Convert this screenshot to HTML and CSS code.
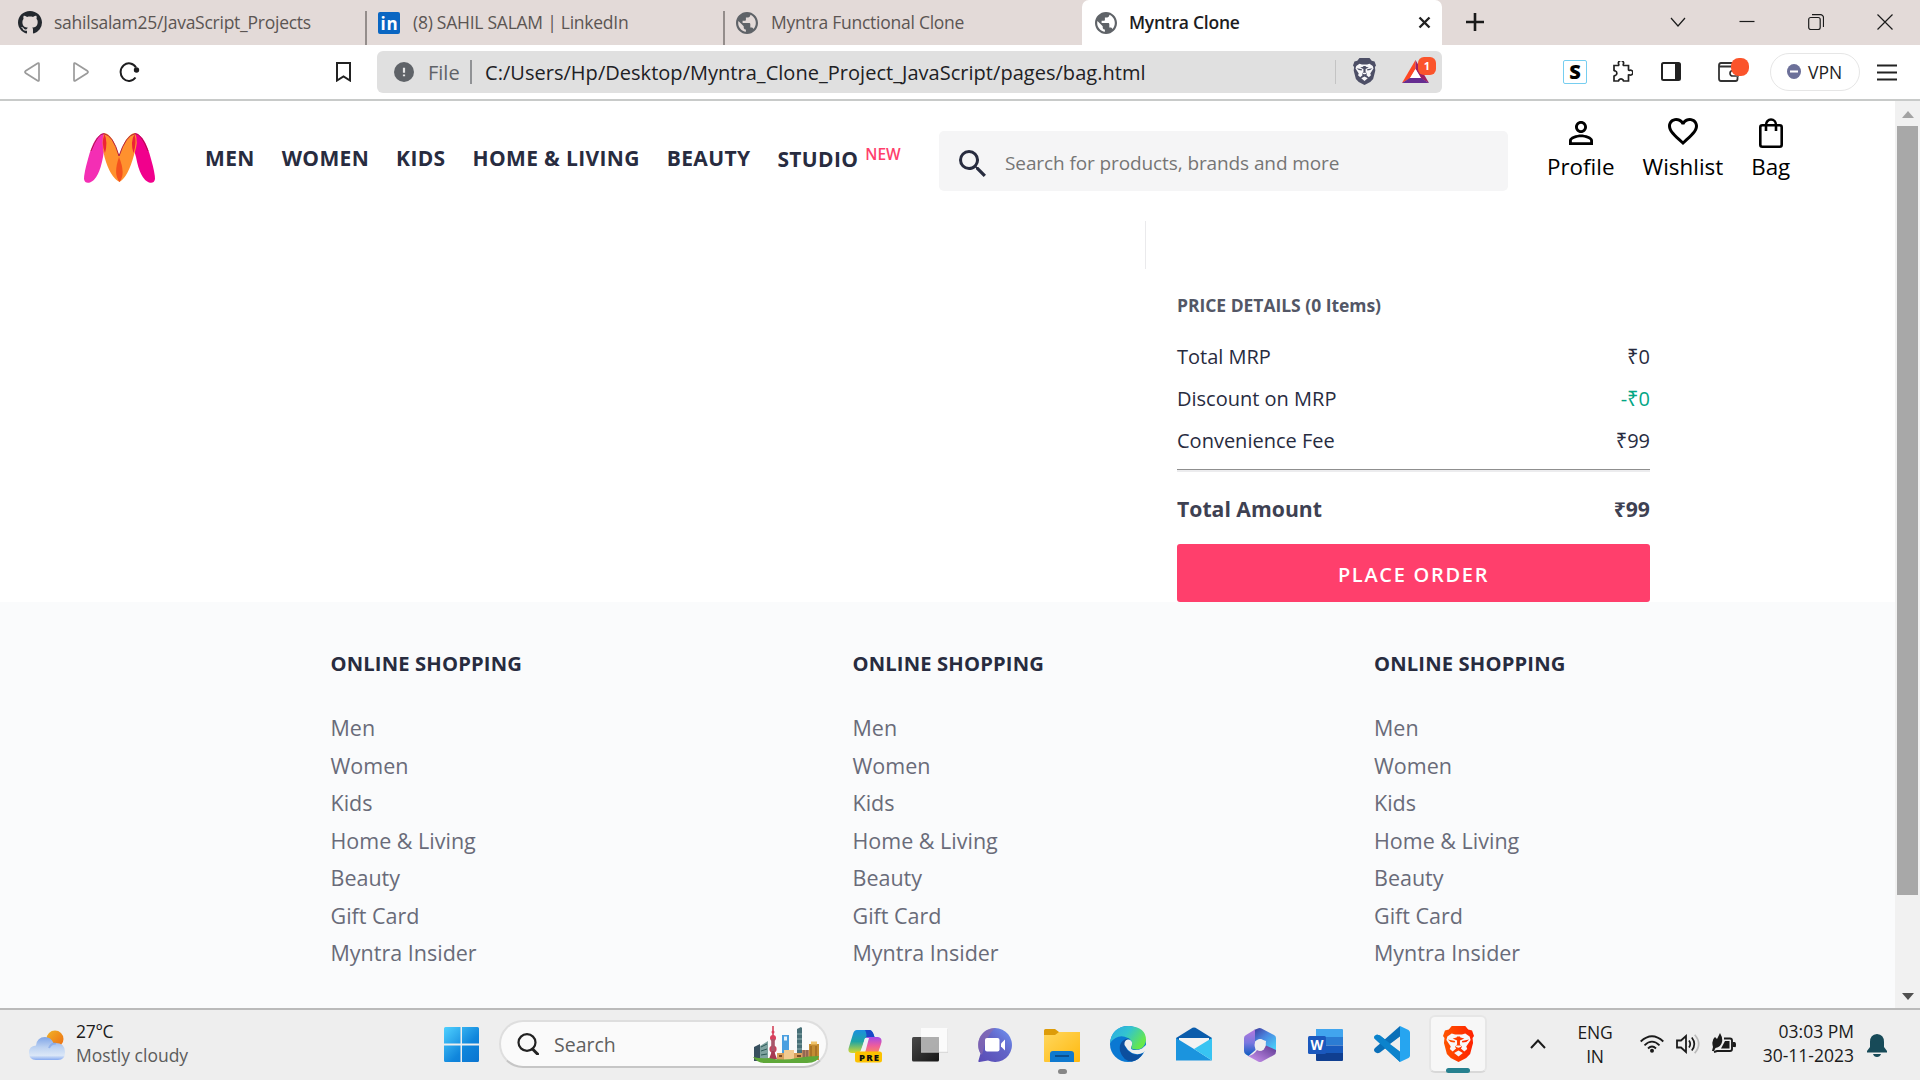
FILE: index.html
```html
<!DOCTYPE html>
<html lang="en">
<head>
<meta charset="utf-8">
<title>Myntra Clone</title>
<link rel="stylesheet" href="styles.css">
</head>
<body>
<svg class="defs" aria-hidden="true">
  <defs>
    <linearGradient id="gWin" x1="0" y1="0" x2="1" y2="1"><stop offset="0" stop-color="#4fd1ff"/><stop offset=".6" stop-color="#1086dc"/><stop offset="1" stop-color="#0a74d0"/></linearGradient>
    <linearGradient id="gCloud" x1="0" y1="0" x2="0" y2="1"><stop offset="0" stop-color="#7fa5e8"/><stop offset=".45" stop-color="#bdd2f1"/><stop offset=".8" stop-color="#dbe7f7"/><stop offset="1" stop-color="#86aaf0"/></linearGradient>
    <linearGradient id="gSun" x1="0" y1="0" x2="1" y2="1"><stop offset="0" stop-color="#f0b429"/><stop offset="1" stop-color="#ee6a10"/></linearGradient>
    <linearGradient id="gCopA" x1="0" y1="0" x2="0" y2="1"><stop offset="0" stop-color="#1b8fe0"/><stop offset=".5" stop-color="#1fa5a5"/><stop offset="1" stop-color="#d6d92c"/></linearGradient>
    <linearGradient id="gCopB" x1="0" y1="0" x2="0" y2="1"><stop offset="0" stop-color="#a44ae8"/><stop offset=".55" stop-color="#ee5d9c"/><stop offset="1" stop-color="#f98a5c"/></linearGradient>
    <linearGradient id="gDark" x1="0" y1="0" x2="1" y2="1"><stop offset="0" stop-color="#4a4a4a"/><stop offset="1" stop-color="#161616"/></linearGradient>
    <linearGradient id="gChat" x1="1" y1="0" x2="0" y2="1"><stop offset="0" stop-color="#6f97f5"/><stop offset=".45" stop-color="#6264c7"/><stop offset="1" stop-color="#5a4bb5"/></linearGradient>
    <linearGradient id="gFolder" x1="0" y1="0" x2="1" y2="1"><stop offset="0" stop-color="#ffd75e"/><stop offset="1" stop-color="#ffb90f"/></linearGradient>
    <linearGradient id="gEdge" x1="0" y1="0" x2="1" y2=".5"><stop offset="0" stop-color="#2aa8e8"/><stop offset=".5" stop-color="#33c4cf"/><stop offset="1" stop-color="#66e84a"/></linearGradient>
    <linearGradient id="gOff" x1="0" y1="0" x2=".8" y2="1"><stop offset="0" stop-color="#3f3a9c"/><stop offset=".45" stop-color="#4a86e0"/><stop offset="1" stop-color="#48d2fa"/></linearGradient>
    <linearGradient id="gOffB" x1="0" y1="0" x2="0" y2="1"><stop offset="0" stop-color="#b478dc"/><stop offset=".5" stop-color="#7a78e0"/><stop offset="1" stop-color="#0d5cc0"/></linearGradient>
    <linearGradient id="gOffC" x1="0" y1="1" x2="1" y2="0"><stop offset="0" stop-color="#cf98f2"/><stop offset="1" stop-color="#5c3790"/></linearGradient>
    <linearGradient id="gBrave" x1="0" y1="0" x2="1" y2="0"><stop offset="0" stop-color="#ff5500"/><stop offset="1" stop-color="#ff2000"/></linearGradient>
    <symbol id="globe" viewBox="2 2 20 20" preserveAspectRatio="none"><path fill="#5f6368" d="M12 2C6.480 2 2 6.480 2 12s4.480 10 10 10 10-4.480 10-10S17.520 2 12 2zm-1 17.930c-3.950-.49-7-3.850-7-7.930 0-.62.08-1.210.21-1.790L9 15v1c0 1.100.9 2 2 2v1.930zm6.900-2.540c-.26-.81-1-1.390-1.900-1.390h-1v-3c0-.55-.45-1-1-1H8v-2h2c.55 0 1-.45 1-1V7h2c1.100 0 2-.9 2-2v-.41c2.930 1.190 5 4.060 5 7.410 0 2.080-.8 3.970-2.100 5.390z"/></symbol>
    <symbol id="lion" viewBox="0 0 32 36" preserveAspectRatio="none">
      <path d="M9 0H23L26 3.500 30 4.500 32 10 30.500 12 31 17 28 28 24 32 16 36 8 32 4 28 1 17 1.500 12 0 10 2 4.500 6 3.500Z"/>
      <path class="face" d="M4.500 10.500 9 7.500 12.500 8.500H19.500L23 7.500 27.500 10.500 28.500 14 24 20.500 25 23 22 25.500 18.500 22.500 19.500 20.500 17.500 18.500V14.500L22 12.500 18 11.500 17.500 10.500H14.500L14 11.500 10 12.500 14.500 14.500V18.500L12.500 20.500 13.500 22.500 10 25.500 7 23 8 20.500 3.500 14ZM11.500 27 16 24.500 20.500 27 16 30.500Z"/>
      <path d="M5 13.500 12.500 15 12 16.500 8 16ZM27 13.500 19.500 15 20 16.500 24 16Z"/>
      <path class="face" d="M12 19.500H20L16 23Z"/>
      <path d="M12.500 20.500Q16 22.800 19.500 20.500L17.500 23.300H14.500Z"/>
    </symbol>
  </defs>
</svg>

<div class="tabs">
  <div class="tab tab-first">
    <svg class="fav-gh" viewBox="0 0 16 16" preserveAspectRatio="none"><path fill="#24292f" d="M8 0C3.580 0 0 3.580 0 8c0 3.540 2.290 6.530 5.470 7.590.4.07.55-.17.55-.38 0-.19-.01-.82-.01-1.490-2.010.37-2.530-.49-2.690-.94-.09-.23-.48-.94-.82-1.130-.28-.15-.68-.52-.01-.53.63-.01 1.080.58 1.230.82.72 1.210 1.870.87 2.330.66.07-.52.28-.87.51-1.070-1.780-.2-3.640-.89-3.640-3.950 0-.87.31-1.590.82-2.150-.08-.2-.36-1.020.08-2.120 0 0 .67-.21 2.200.82.64-.18 1.320-.27 2-.27s1.360.09 2 .27c1.530-1.040 2.200-.82 2.200-.82.44 1.100.16 1.920.08 2.120.51.56.82 1.270.82 2.150 0 3.070-1.870 3.750-3.650 3.950.29.25.54.73.54 1.480 0 1.070-.01 1.930-.01 2.200 0 .21.15.46.55.38A8.010 8.010 0 0 0 16 8c0-4.420-3.580-8-8-8z"/></svg>
    <span>sahilsalam25/JavaScript_Projects</span>
  </div>
  <div class="tab tab-second">
    <svg class="fav" viewBox="0 0 22 22" preserveAspectRatio="none"><rect width="22" height="22" rx="2" fill="#0a66c2"/><text x="2.500" y="18" font-family="Open Sans, sans-serif" font-weight="700" font-size="17" textLength="17" fill="#fff">in</text></svg>
    <span>(8) SAHIL SALAM | LinkedIn</span>
  </div>
  <div class="tab tab-third">
    <svg class="fav"><use href="#globe"/></svg>
    <span>Myntra Functional Clone</span>
  </div>
  <div class="tab active">
    <svg class="fav"><use href="#globe"/></svg>
    <span>Myntra Clone</span>
    <svg class="tab-close" viewBox="0 0 13 13"><path d="M1.500 1.500l10 10M11.500 1.500l-10 10" stroke="#222" stroke-width="2.400"/></svg>
  </div>
  <svg class="new-tab" viewBox="0 0 18 18"><path d="M9 0v18M0 9h18" stroke="#1a1a1a" stroke-width="2.600"/></svg>
  <div class="window-buttons">
    <svg viewBox="0 0 16 16"><path d="M1 4l7 8 7-8"/></svg>
    <svg viewBox="0 0 16 16"><path d="M.5 7.500h15"/></svg>
    <svg viewBox="0 0 16 16"><rect x=".7" y="3.500" width="11.500" height="12" rx="2"/><path d="M4 .7h8.500a3 3 0 0 1 3 3V13"/></svg>
    <svg viewBox="0 0 16 16"><path d="M.5.5l15 15M15.500.5l-15 15"/></svg>
  </div>
</div>

<div class="toolbar">
  <svg class="back" viewBox="0 0 16 20"><path d="M15 2v16q0 1.500-1.300.7L1.500 11q-1-1 0-2L13.700 1.300Q15 .5 15 2Z" fill="none" stroke="#9b9b9b" stroke-width="1.700"/></svg>
  <svg class="fwd" viewBox="0 0 16 20"><path d="M1 2v16q0 1.500 1.300.7L14.500 11q1-1 0-2L2.300 1.300Q1 .5 1 2Z" fill="none" stroke="#9b9b9b" stroke-width="1.700"/></svg>
  <svg class="reload" viewBox="0 0 21 20"><path d="M16.500 15.500A8.300 8.800 0 1 1 17 5.500" fill="none" stroke="#1d1d1f" stroke-width="2"/><circle cx="17.500" cy="8" r="2.700" fill="#1d1d1f"/></svg>
  <svg class="bookmark" viewBox="0 0 15 20"><path d="M1 1h13v17.500L7.500 14.500 1 18.500Z" fill="none" stroke="#222" stroke-width="2"/></svg>
  <div class="address">
    <svg class="info" viewBox="0 0 20 24" preserveAspectRatio="none"><ellipse cx="10" cy="12" rx="10" ry="12" fill="#5f6368"/><path d="M10 7v6M10 15v2" stroke="#e6e6e6" stroke-width="2.200"/></svg>
    <span class="scheme">File</span>
    <span class="url">C:/Users/Hp/Desktop/Myntra_Clone_Project_JavaScript/pages/bag.html</span>
    <i class="bar"></i>
    <svg class="shield"><use href="#lion"/></svg>
    <div class="rewards">
      <svg viewBox="0 0 27 23" preserveAspectRatio="none"><path d="M13.500 0 0 23 8 18.500 13.500 9Z" fill="#ff4724"/><path d="M13.500 0 27 23 19 18.500 13.500 9Z" fill="#9e1f63"/><path d="M0 23H27L19 18H8Z" fill="#662d91"/><path d="M13.500 9 19 18H8Z" fill="#fff"/></svg>
      <b>1</b>
    </div>
  </div>
  <div class="ext-s">S</div>
  <svg class="puzzle" viewBox="0 0 21 22"><path d="M2 4.500H6.500Q7 4 6.700 3.300A2.600 2.600 0 1 1 11.300 3.300Q11 4 11.500 4.500H16.500V9Q17 9.500 17.700 9.200A2.500 2.500 0 1 1 17.700 14Q17 13.600 16.500 14V20H11.500Q11 19.500 11.200 19A2.600 2.600 0 0 0 6.800 19Q7 19.500 6.500 20H2V15Q2.500 14.500 3 14.700A2.600 2.600 0 0 0 3 9.700Q2.500 10 2 9.500Z" fill="none" stroke="#222" stroke-width="1.700"/></svg>
  <svg class="panel" viewBox="0 0 20 19"><rect x="1" y="1" width="18" height="17" rx="1.500" fill="#fff" stroke="#222" stroke-width="2"/><path d="M14 1h5v17h-5z" fill="#222"/></svg>
  <div class="wallet">
    <svg viewBox="0 0 21 20"><path d="M17 1H3Q1 1 1 3.500V16.500Q1 19 3 19H17.500Q19.500 19 19.500 17V15M1 4.500H16.500M19.500 8V6" fill="none" stroke="#333" stroke-width="1.800"/><path d="M20 8.500h-5q-3 0-3 2.800t3 2.700h5z" fill="none" stroke="#333" stroke-width="1.700"/></svg>
    <b></b>
  </div>
  <div class="vpn">
    <svg viewBox="0 0 14 16" preserveAspectRatio="none"><ellipse cx="7" cy="8" rx="7" ry="8" fill="#6c7099"/><path d="M3 8h8" stroke="#fff" stroke-width="2.200"/></svg>
    VPN
  </div>
  <svg class="menu" viewBox="0 0 20 17"><path d="M0 1.500h20M0 8.500h20M0 15.500h20" stroke="#222" stroke-width="2"/></svg>
</div>

<div class="viewport">
  <div class="page">
    <header class="header">
      <svg class="logo" viewBox="0 0 71 50" preserveAspectRatio="none">
        <path d="M20 0Q10 2 4 26 0 40 0 46 1 51 6 49.500 15 46 19 24 22 10 20 0Z" fill="#f42eb4"/>
        <path d="M51 0Q61 2 67 26 71 40 71 46 70 51 65 49.500 56 46 52 24 47 10 51 0Z" fill="#f1008c"/>
        <path d="M20 0Q29 1 35 23 42 1 51 0 55 8 50 22 44 44 35.500 49 26 44 20.500 24 17 8 20 0Z" fill="#ff912e"/>
        <path d="M20.500 1Q24 9 21 20 17 10 20.500 1ZM50.500 1Q46 9 49.500 20 53 10 50.500 1Z" fill="#ee2335"/>
        <path d="M35 24Q42 41 35.500 49 29 41 35 24Z" fill="#f4511e"/>
        <path d="M7 18Q14 0 20 .7 29 2 35 23 42 2 51 .7 57 0 64 18" fill="none" stroke="#a8123e" stroke-width=".9"/>
      </svg>
      <nav class="nav">
        <a>MEN</a><a>WOMEN</a><a>KIDS</a><a>HOME &amp; LIVING</a><a>BEAUTY</a><a class="studio">STUDIO<sup>NEW</sup></a>
      </nav>
      <div class="search">
        <svg viewBox="3 3 17.500 17.500"><path fill="#282c3f" d="M15.500 14h-.79l-.28-.27A6.471 6.471 0 0 0 16 9.500 6.500 6.500 0 1 0 9.500 16c1.610 0 3.090-.59 4.230-1.570l.27.28v.79l5 4.990L20.490 19l-4.990-5zm-6 0C7.010 14 5 11.990 5 9.500S7.010 5 9.500 5 14 7.010 14 9.500 11.990 14 9.500 14z"/></svg>
        <span>Search for products, brands and more</span>
      </div>
      <div class="actions">
        <a><svg class="i-person" viewBox="4 4 16 16" preserveAspectRatio="none"><path d="M12 5.900c1.160 0 2.100.94 2.100 2.100s-.94 2.100-2.100 2.100S9.900 9.160 9.900 8s.94-2.100 2.100-2.100m0 9c2.970 0 6.100 1.460 6.100 2.100v1.100H5.900V17c0-.64 3.130-2.100 6.100-2.100M12 4C9.790 4 8 5.790 8 8s1.790 4 4 4 4-1.790 4-4-1.790-4-4-4zm0 9c-2.670 0-8 1.340-8 4v3h16v-3c0-2.660-5.330-4-8-4z"/></svg><span>Profile</span></a>
        <a><svg class="i-heart" viewBox="2 3 20 18.350" preserveAspectRatio="none"><path d="M16.500 3c-1.740 0-3.410.81-4.500 2.090C10.910 3.810 9.240 3 7.500 3 4.420 3 2 5.420 2 8.500c0 3.780 3.400 6.860 8.550 11.540L12 21.350l1.450-1.320C18.600 15.360 22 12.280 22 8.500 22 5.420 19.580 3 16.500 3zm-4.400 15.550l-.1.1-.1-.1C7.140 14.240 4 11.390 4 8.500 4 6.500 5.500 5 7.500 5c1.540 0 3.040.99 3.570 2.360h1.870C13.460 5.990 14.960 5 16.500 5c2 0 3.500 1.500 3.500 3.500 0 2.890-3.140 5.740-7.900 10.050z"/></svg><span>Wishlist</span></a>
        <a><svg class="i-bag" viewBox="0 0 24 30" preserveAspectRatio="none"><rect x="1.300" y="7.300" width="21.400" height="21.400" rx="2" fill="none" stroke="#000" stroke-width="2.600"/><path d="M7 13V7a5 5.500 0 0 1 10 0v6" fill="none" stroke="#000" stroke-width="2.600"/></svg><span>Bag</span></a>
      </div>
    </header>

    <main class="bag">
      <section class="items"></section>
      <section class="summary">
        <h2>PRICE DETAILS (0 Items)</h2>
        <div class="row"><span>Total MRP</span><span>₹0</span></div>
        <div class="row"><span>Discount on MRP</span><span class="green">-₹0</span></div>
        <div class="row"><span>Convenience Fee</span><span>₹99</span></div>
        <div class="rule"></div>
        <div class="total"><span>Total Amount</span><span>₹99</span></div>
        <button class="order">PLACE ORDER</button>
      </section>
    </main>

    <footer class="footer">
      <div><h3>ONLINE SHOPPING</h3><a>Men</a><a>Women</a><a>Kids</a><a>Home &amp; Living</a><a>Beauty</a><a>Gift Card</a><a>Myntra Insider</a></div>
      <div><h3>ONLINE SHOPPING</h3><a>Men</a><a>Women</a><a>Kids</a><a>Home &amp; Living</a><a>Beauty</a><a>Gift Card</a><a>Myntra Insider</a></div>
      <div><h3>ONLINE SHOPPING</h3><a>Men</a><a>Women</a><a>Kids</a><a>Home &amp; Living</a><a>Beauty</a><a>Gift Card</a><a>Myntra Insider</a></div>
    </footer>
  </div>
  <div class="scrollbar"><i class="up"></i><i class="thumb"></i><i class="down"></i></div>
</div>

<div class="taskbar">
  <svg class="weather" viewBox="0 0 36 30" preserveAspectRatio="none"><circle cx="26" cy="9" r="8.500" fill="url(#gSun)"/><path d="M7 30Q0 30 0 22.500 0 16 7 15.500 8 7 16 7 22 7 24.500 13 36 12 36 22 36 30 29 30Z" fill="url(#gCloud)"/><path d="M20 18Q22 13 27 13.500" fill="none" stroke="#6d97e6" stroke-width="2" opacity=".5"/></svg>
  <div class="weather-text"><span>27°C</span><em>Mostly cloudy</em></div>
  <svg class="start" viewBox="0 0 35 35"><path d="M1.500 0H16.500V16.500H0V1.500Q0 0 1.500 0ZM18 0H33.500Q35 0 35 1.500V16.500H18ZM0 18.500H16.500V35H1.500Q0 35 0 33.500ZM18 18.500H35V33.500Q35 35 33.500 35H18Z" fill="url(#gWin)"/></svg>
  <div class="task-search">
    <svg class="lens" viewBox="0 0 22 22"><ellipse cx="10" cy="9.500" rx="8.500" ry="8.300" fill="none" stroke="#222" stroke-width="2.200"/><path d="M15.500 16l5 5" stroke="#222" stroke-width="3" stroke-linecap="round"/></svg>
    <span>Search</span>
    <svg class="city" viewBox="0 0 67 37">
      <path d="M1 21l6-3v17H1z" fill="#38505f"/><path d="M7 20l8-5v20H7z" fill="#7fa3a0"/><path d="M8 21l6-3M8 25l6-2M8 29l6-1" stroke="#2d5a57"/>
      <path d="M20 0v35" stroke="#d0374f" stroke-width="1.500"/><circle cx="20" cy="12" r="3" fill="#d8405c"/><circle cx="20" cy="6" r="1.500" fill="#d8405c"/><circle cx="20" cy="23" r="3.600" fill="#c9405a"/><path d="M18.200 13h3.600v19h-3.600z" fill="#a8566a"/><path d="M16 33l3-8h2l3 8z" fill="#a63952"/>
      <path d="M29 9h7v25h-7z" fill="#4a9fe0"/><path d="M31 10.500h3v4h-3z" fill="#e7f3fb"/>
      <path d="M44 3l4-2 1 1v32h-5z" fill="#486f77"/><path d="M44 8h5M44 13h5M44 18h5M44 23h5" stroke="#8fb0b0"/>
      <path d="M24 27h26v8H24z" fill="#d9a05c"/><path d="M31 24h10v11H31z" fill="#f2cb91"/><path d="M26 30h3M44 30h4" stroke="#7b4a26" stroke-width="2"/>
      <path d="M49 24h8v11h-8z" fill="#b98562"/><path d="M51 24v9M54 24v9" stroke="#6e4a44"/><path d="M56 18h10v16H56z" fill="#c58d33"/><path d="M58 15.500h6v3h-6z" fill="#f0c36a"/><path d="M58 20v12M63 20v12" stroke="#8d5a1c"/>
      <path d="M0 31Q8 33 16 32 30 35 44 32 56 30 66 30 65 37 54 37H12Q4 37 0 31Z" fill="#5fa839"/>
    </svg>
  </div>
  <svg class="copilot" viewBox="0 0 34 33"><path d="M9 0H22Q25 1 26.500 7H20Q17 7 16 11L13 20Q12 23 8 23H4Q-1 23 1 17L5 4Q6 0 9 0Z" fill="url(#gCopA)"/><path d="M17 0H22Q25 1 26.500 7H20Q18 7 17 9 20 5 17 0Z" fill="#1a48c8"/><path d="M19 7H30Q35 8 33 14L30 23H14Q18 20 19 7Z" fill="url(#gCopB)"/><path d="M17 8H21L17 23H12Q15 17 17 8Z" fill="#eef0f4"/><rect x="7" y="21.500" width="27" height="11" rx="2.500" fill="#fcc200"/><text x="11" y="30.500" font-family="Open Sans, sans-serif" font-weight="800" font-size="9.500" textLength="20" fill="#111">PRE</text></svg>
  <svg class="taskview" viewBox="0 0 36 34"><rect y="9" width="27" height="24.500" rx="1.500" fill="url(#gDark)"/><path d="M9 0H36V24H9Z" fill="#fff" opacity=".75"/><path d="M9 9h18v15H9z" fill="#a6a6a6" opacity=".8"/><path d="M9 24.300H36V.5" fill="none" stroke="#cfcfcf" stroke-width=".8"/></svg>
  <svg class="chat" viewBox="0 0 34 34"><path d="M17 0A17 17 0 1 1 10 32.500L1.500 34Q0 34 .5 32.500L2.500 25.500A17 17 0 0 1 17 0Z" fill="url(#gChat)"/><path d="M0 17A17 17 0 0 1 17 0Q8 8 4 27 0 22 0 17Z" fill="#8f6bab" opacity=".6"/><rect x="7" y="10" width="14.500" height="13.500" rx="2" fill="#fff"/><path d="M23 15.500L27 11.500V22.500L23 18.500Z" fill="#fff"/></svg>
  <div class="task-folder">
    <svg viewBox="0 0 36 33"><path d="M0 7V1.500Q0 0 1.500 0H11L15 3H34.500Q36 3 36 4.500V10H0Z" fill="#dd9c09"/><path d="M0 6H11L15 3H36V32Q36 33 35 33H1Q0 33 0 32Z" fill="url(#gFolder)"/><path d="M6 33V25Q6 22 9 22H27Q30 22 30 25V33Z" fill="#0f79cf"/><path d="M11 27h14" stroke="#0a4f8f" stroke-width="2"/></svg>
    <i></i>
  </div>
  <svg class="edge" viewBox="0 0 36 36"><circle cx="18" cy="18" r="18" fill="#0a78d2"/><path d="M0 17Q2 0 19 0 36 1 36 14 35 23 27 23.500 20 23.500 21.500 20 24 15 18 12 8 7 0 17Z" fill="url(#gEdge)"/><path d="M20 12Q8 14 10 25 13 35 22 35.500 29 34.500 33 27 28 30 23 28 16 25 15 19 15 14 20 12Z" fill="#0c4f9e"/><path d="M18 13.500Q23 14 22 19 20 22 22 23.500 27 25 32 22.500L36 19V24L33.500 26.500Q28 29.500 22 27 17 24 14.500 19 14 14 18 13.500Z" fill="#eee"/></svg>
  <svg class="mail" viewBox="0 0 36 34"><path d="M0 11 16.500 .8Q18 0 19.500 .8L36 11V22H0Z" fill="#0b5cab"/><path d="M3 11H33V24H3Z" fill="#f3f3f3"/><path d="M0 11 18 22 36 33.500H0Z" fill="#1b94de"/><path d="M36 11V33.500L18 22Z" fill="#38c4f2"/></svg>
  <svg class="office" viewBox="0 0 32 34"><path d="M10 2 14.500 .3Q16 -.2 17.500 .5L30 7Q32 8 32 10V24L21.500 18 22 13 16 11 10 14Z" fill="url(#gOff)"/><path d="M11 1.500V17L11.500 22 4.500 28 2 26.500Q0 25.500 0 23V10Q0 8 2 7Z" fill="url(#gOffB)"/><path d="M4 28Q10 27 13 22L18 22.500 22 17.500 32 22V23.500Q32 26 30 27L18 33.500Q16 34.500 14 33.500Z" fill="url(#gOffC)"/><ellipse cx="16" cy="17" rx="5.500" ry="6" fill="#eee"/></svg>
  <svg class="word" viewBox="0 0 35 33"><path d="M8 0H34Q35 0 35 1V8.500H8Z" fill="#41a5ee"/><path d="M8 8H35V16.500H8Z" fill="#2b7cd3"/><path d="M8 16.500H35V24H8Z" fill="#185abd"/><path d="M8 24H35V31Q35 32 34 32H9Q8 32 8 31Z" fill="#103f91"/><rect y="7" width="18" height="18" rx="1.500" fill="#1b58bd"/><text x="2.500" y="21" font-family="Open Sans, sans-serif" font-weight="700" font-size="14" textLength="13" lengthAdjust="spacingAndGlyphs" fill="#fff">W</text></svg>
  <svg class="code" viewBox="0 0 36 36"><path d="M26 0V36L1 13Q-1 11 1 9.500L3 8.500 6 9.500 26 25Z" fill="#0a86d0"/><path d="M26 0V11L6 26.500Q3 28 1 26 -1 24 1 22Z" fill="#0a6fb8"/><path d="M26 25.500V36L.5 12.500Q0 10.500 3 8.700L6 9.500Z" fill="#0c83cc"/><path d="M26 10.500V25.500L16 18Z" fill="#eee"/><path d="M26 0 34.500 4Q36 5 36 6.500V29.500Q36 31 34.500 32L26 36Z" fill="#26a5f0"/></svg>
  <div class="task-active"><svg><use href="#lion"/></svg><i></i></div>
  <svg class="chev" viewBox="0 0 16 10"><path d="M1 9l7-7.500L15 9" fill="none" stroke="#1b1b1b" stroke-width="2"/></svg>
  <div class="lang"><span>ENG</span><span>IN</span></div>
  <svg class="wifi" viewBox="0 0 24 18"><g fill="none" stroke="#1b1b1b" stroke-width="1.800"><path d="M.7 6.500Q12-4 23.300 6.500M4.500 10.300Q12 3 19.500 10.300M8 13.500Q12 9.500 16 13.500"/></g><circle cx="12" cy="15.700" r="2" fill="#1b1b1b"/></svg>
  <svg class="vol" viewBox="0 0 24 20"><path d="M1 6.500H5L10 2V18L5 13.500H1Z" fill="none" stroke="#1b1b1b" stroke-width="1.800"/><g fill="none" stroke-width="1.700"><path d="M13 6.500q2.500 3.500 0 7M15.800 3.500q5 6.500 0 13" stroke="#1b1b1b"/><path d="M18.700 .8q8 9.200 0 18.400" stroke="#bbb"/></g></svg>
  <svg class="batt" viewBox="0 0 24 20"><path d="M12 5.500H18Q20 5.500 20 7.500V16Q20 18 18 18H5L2 19" fill="none" stroke="#1b1b1b" stroke-width="1.900"/><path d="M21 9h1.500Q24 9 24 12t-1.500 2H21zM9 15.500L13 8h4.500v7.500zM1 14Q-1 7 3 4L5 6 8 0Q11 5 10 9 9 14 3.500 15L2 18 0 18Z" fill="#1b1b1b"/></svg>
  <div class="clock"><span>03:03 PM</span><span>30-11-2023</span></div>
  <svg class="bell" viewBox="0 0 20 23" preserveAspectRatio="none"><path d="M10 0Q17 .5 17 8V13L20 17V18.500H0V17L3 13V8Q3 .5 10 0ZM6 20H14Q13 23 10 23T6 20Z" fill="#174a58"/></svg>
</div>
</body>
</html>
```
FILE: styles.css
```css
* { box-sizing: border-box; }
html, body { margin: 0; }
body {
  width: 1920px; height: 1080px; overflow: hidden;
  display: flex; flex-direction: column;
  background: #fff; color: #000;
  font-family: "Open Sans", "Noto Sans", sans-serif;
  white-space: nowrap;
}
svg { display: block; flex: none; }
.defs { position: absolute; width: 0; height: 0; }

/* Tab strip */
.tabs { height: 45px; flex: none; display: flex; align-items: center; background: #e3dad8; }
.tab {
  height: 45px; display: flex; align-items: center; flex: none;
  font-size: 17.5px; letter-spacing: -0.25px; color: #5b5553;
}
.tab span { padding-bottom: 1px; }
.tab-first { width: 365px; padding-left: 18px; gap: 12px; }
.tab-second, .tab-third { position: relative; gap: 13px; padding-left: 13px; }
.tab-second::before, .tab-third::before {
  content: ""; position: absolute; left: 0; top: 11px; width: 1.5px; height: 34px; background: #948d8b;
}
.tab-second { width: 358px; }
.tab-third { width: 359px; }
.fav { width: 22px; height: 22px; }
.fav-gh { width: 24px; height: 23px; }
.tab.active {
  width: 360px; padding: 0 11px 0 13px; gap: 12px; background: #fff;
  border-radius: 7px 7px 0 0; color: #1d1d1f; font-weight: 600;
}
.tab-close { width: 13px; height: 13px; margin-left: auto; }
.new-tab { width: 18px; height: 18px; margin: 0 0 1px 24px; }
.window-buttons { display: flex; gap: 53px; margin-left: auto; padding: 0 27px 2px 0; }
.window-buttons svg { width: 16px; height: 16px; fill: none; stroke: #1b1b1b; stroke-width: 1.2; }

/* Toolbar */
.toolbar {
  height: 56px; flex: none; display: flex; align-items: center;
  padding-bottom: 1px; border-bottom: 2px solid #c8cac9;
}
.back { width: 16px; height: 20px; margin-left: 24px; }
.fwd { width: 16px; height: 20px; margin-left: 33px; }
.reload { width: 21px; height: 20px; margin-left: 30px; }
.bookmark { width: 15px; height: 20px; margin-left: 196px; }
.address {
  width: 1065px; height: 42px; margin-left: 26px; padding-left: 17px;
  display: flex; align-items: center; background: #e0e0e0; border-radius: 6px; font-size: 20px;
}
.info { width: 20px; height: 20px; }
.scheme { width: 44px; margin-left: 14px; padding-top: 1px; color: #5f6368; font-size: 20px; }
.url { padding: 1px 0 0 13px; color: #202124; position: relative; letter-spacing: 0.03px; }
.url::before { content: ""; position: absolute; left: -2px; top: 2px; width: 2px; height: 24px; background: #909295; }
.bar { width: 1.5px; height: 24px; margin-left: auto; background: #c4c4c4; }
.shield { width: 23px; height: 27px; margin-left: 17px; fill: #4d4f66; }
.face { fill: #f7f7f9; }
.rewards { position: relative; margin: 0 13px 0 26px; }
.rewards svg { width: 27px; height: 23px; }
.rewards b {
  position: absolute; left: 16px; top: -3px; width: 18px; height: 18px; border-radius: 6px;
  background: #fb542b; color: #fff; font-size: 11px; line-height: 18px; text-align: center;
}
.ext-s {
  width: 24px; height: 24px; margin-left: 121px; border: 1.5px solid #76cef0; border-radius: 2px;
  font-size: 20px; line-height: 21px; font-weight: 800; text-align: center;
}
.puzzle { width: 21px; height: 22px; margin-left: 25px; }
.panel { width: 20px; height: 19px; margin-left: 28px; }
.wallet { position: relative; margin-left: 37px; }
.wallet svg { width: 21px; height: 20px; }
.wallet b { position: absolute; left: 13px; top: -4px; width: 18px; height: 18px; border-radius: 8px; background: #fb542b; }
.vpn {
  width: 90px; height: 38px; margin-left: 31px; padding-left: 16px; display: flex; align-items: center; gap: 7px;
  border: 1px solid #e6e6e6; border-radius: 19px; font-size: 17.5px; color: #1d1d1f;
}
.vpn svg { width: 14px; height: 15px; }
.menu { width: 20px; height: 17px; margin: 1px 0 0 17px; }

/* Browser viewport */
.viewport { height: 907px; flex: none; display: flex; }
.page { width: 1895px; display: flex; flex-direction: column; }
.header { height: 120px; flex: none; display: flex; align-items: center; padding-left: 84px; }
.logo { width: 71px; height: 50px; margin-bottom: 6px; }
.nav {
  width: 734px; display: flex; gap: 27px; margin-left: 50px; padding-bottom: 5px;
  font-size: 21px; font-weight: 700; letter-spacing: 0.35px; color: #282c3f;
}
.studio { padding-top: 1px; }
.studio sup { margin-left: 7px; font-size: 15.5px; font-weight: 600; line-height: 0; vertical-align: 7.5px; letter-spacing: 0; color: #ff3f6c; }
.search {
  width: 569px; height: 60px; display: flex; align-items: center; gap: 19px; padding-left: 20px;
  background: #f5f5f6; border-radius: 5px; font-size: 19px; letter-spacing: -0.1px; color: #757575;
}
.search svg { width: 27px; height: 27px; margin-top: 5px; }
.search span { padding-top: 4px; }
.actions { display: flex; gap: 28px; margin-left: 39px; padding-bottom: 25px; font-size: 22.4px; }
.actions a { height: 67px; display: flex; flex-direction: column; align-items: center; }
.actions svg { margin: auto 0; }
.actions span { line-height: 31px; }
.i-person { width: 24px; height: 24px; }
.actions .i-heart { width: 30px; height: 27px; margin-top: 3px; }
.i-bag { width: 24px; height: 30px; }

.bag { height: 381px; flex: none; display: flex; }
.items { width: 1146px; height: 48px; border-right: 1px solid #eaeaec; }
.summary { width: 473px; margin-left: 31px; padding-top: 64px; display: flex; flex-direction: column; font-size: 20px; color: #282c3f; }
.summary h2 { margin: 0 0 11px; font-size: 17.5px; line-height: 40px; font-weight: 700; letter-spacing: -0.03px; color: #535766; }
.row, .total { display: flex; justify-content: space-between; line-height: 42px; }
.green { color: #03a685; }
.rule { height: 3px; margin-top: 7px; border-top: 1px solid #8f8f8f; background: #ececee; }
.total { margin-top: 15px; font-size: 21.2px; line-height: 44px; font-weight: 700; color: #3e4152; }
.order {
  height: 58px; margin-top: 13px; border: 0; border-radius: 3px; background: #ff3f6c; color: #fff;
  font: 600 20px "Open Sans", sans-serif; letter-spacing: 1.7px; padding: 3px 0 0;
}
.footer { flex: 1; display: grid; grid-template-columns: 522px 521.5px 521px; padding: 41px 0 0 330.5px; background: #fafbfc; }
.footer h3 { margin: 0 0 26px; font-size: 20.2px; line-height: 40px; font-weight: 700; letter-spacing: 0.15px; color: #282c3f; }
.footer a { display: block; font-size: 21.5px; line-height: 37.5px; color: #696b79; }

.scrollbar { width: 25px; display: flex; flex-direction: column; align-items: center; background: #f1f1f1; padding: 10px 0 8px; }
.up { border: 6px solid transparent; border-top: 0; border-bottom: 7px solid #a3a3a3; }
.thumb { width: 21px; height: 769px; margin-top: 8px; background: #a8a8a8; }
.down { margin-top: auto; border: 6px solid transparent; border-bottom: 0; border-top: 7px solid #505050; }

/* Taskbar */
.taskbar {
  height: 72px; flex: none; display: flex; align-items: center; background: #eee;
  border-top: 2px solid #bababa; font-size: 17.5px; color: #1b1b1b;
}
.weather { width: 36px; height: 30px; margin-left: 29px; }
.weather-text, .lang, .clock { display: flex; flex-direction: column; line-height: 24px; padding-bottom: 4px; }
.weather-text { width: 120px; margin-left: 11px; }
.weather-text em { font-style: normal; color: #5c5c5c; }
.weather-text span { letter-spacing: -0.3px; }
.start { width: 35px; height: 35px; margin: 0 0 1px 248px; }
.task-search {
  width: 329px; height: 48px; margin: 0 0 2px 20px; padding: 0 6px 0 16px; display: flex; align-items: center;
  border: 2px solid #dedede; border-bottom-color: #c6c6c6; border-radius: 24px; background: #fafafa;
  font-size: 19.5px; color: #5f5f5f;
}
.lens { width: 22px; height: 22px; margin-right: 15px; }
.city { width: 67px; height: 37px; margin-left: auto; }
.copilot { width: 34px; height: 33px; margin: 2px 0 0 20px; }
.taskview { width: 36px; height: 34px; margin-left: 30px; }
.chat { width: 34px; height: 34px; margin-left: 30px; }
.task-folder { position: relative; margin-left: 32px; }
.task-folder svg { width: 36px; height: 33px; }
.task-folder i { position: absolute; left: 14px; top: 40px; width: 9px; height: 5px; border-radius: 3px; background: #868686; }
.edge { width: 36px; height: 36px; margin: 0 0 2px 30px; }
.mail { width: 36px; height: 34px; margin: 0 0 2px 30px; }
.office { width: 32px; height: 34px; margin: 0 0 1px 32px; }
.word { width: 35px; height: 33px; margin-left: 32px; }
.code { width: 36px; height: 36px; margin: 0 0 2px 31px; }
.task-active {
  position: relative; width: 58px; height: 58px; margin: 0 0 2px 19px; display: flex; justify-content: center; padding-top: 9px;
  border: 2px solid #e6e6e6; border-bottom-color: #d8d8d8; border-radius: 6px; background: #f7f7f7;
}
.task-active svg { width: 31px; height: 36px; fill: url(#gBrave); }
.task-active i { position: absolute; left: 15px; bottom: -2px; width: 24px; height: 5px; border-radius: 3px; background: #26808f; }
.chev { width: 16px; height: 10px; margin: 0 0 2px 43px; }
.lang { width: 60px; margin-left: 19px; padding-bottom: 2px; align-items: center; letter-spacing: -0.2px; }
.wifi { width: 24px; height: 18px; margin: 0 0 2px 15px; }
.vol { width: 24px; height: 20px; margin: 0 0 2px 12px; }
.batt { width: 24px; height: 20px; margin: 0 0 5px 12px; }
.clock { width: 100px; margin-left: 18px; align-items: flex-end; }
.bell { width: 20px; height: 23px; margin-left: 13px; }
```
